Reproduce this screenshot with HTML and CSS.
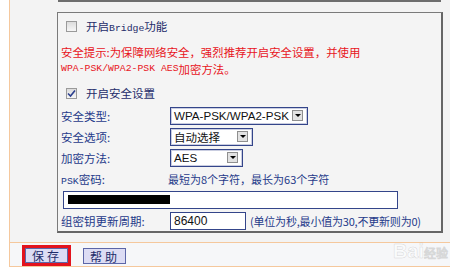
FILE: index.html
```html
<!DOCTYPE html>
<html lang="zh-CN">
<head>
  <meta charset="UTF-8" />
  <title>无线安全设置</title>
  <link rel="stylesheet" href="styles.css">
</head>
<body>

<div class="panel">
  <div class="main">
    <div class="prev-box"></div>

    <div class="box">
      <div class="check-row">
        <span class="cb"></span>
        <span class="cb-label">开启<span class="mono">Bridge</span>功能</span>
      </div>

      <div class="warn">
        <div class="warn-line">安全提示:为保障网络安全，强烈推荐开启安全设置，并使用</div>
        <div class="warn-line"><span class="mono">WPA-PSK/WPA2-PSK AES</span>加密方法。</div>
      </div>

      <div class="check-row second">
        <span class="cb checked">
          <svg width="9" height="9" viewBox="0 0 9 9"><path d="M1 4.5 L3.5 7 L8 1.5" fill="none" stroke="#2b3f8e" stroke-width="1.6"/></svg>
        </span>
        <span class="cb-label">开启安全设置</span>
      </div>

      <div class="form">
        <div class="label">安全类型:</div>
        <div><span class="select type"><span class="val">WPA-PSK/WPA2-PSK</span><span class="arrow"></span></span></div>

        <div class="label">安全选项:</div>
        <div><span class="select option"><span class="val cjk">自动选择</span><span class="arrow"></span></span></div>

        <div class="label">加密方法:</div>
        <div><span class="select method"><span class="val">AES</span><span class="arrow"></span></span></div>

        <div class="label"><span class="mono">PSK</span>密码:</div>
        <div class="hint">最短为8个字符，最长为63个字符</div>

        <div class="full"><span class="input wide"><span class="mask"></span></span></div>

        <div class="label">组密钥更新周期:</div>
        <div class="inline"><span class="input short">86400</span><span class="hint note">(单位为秒,最小值为30,不更新则为0)</span></div>
      </div>
    </div>
  </div>

  <div class="btnrow">
    <span class="hl"><span class="btn">保存</span></span>
    <span class="btn">帮助</span>
  </div>

  <div class="watermark">Bai<span>经验</span></div>
</div>

</body>
</html>
```

FILE: styles.css
```css
* { box-sizing: border-box; }
body {
  margin: 0;
  background: #fff;
  font-family: "Noto Sans CJK SC", "Liberation Sans", sans-serif;
  color: #1f3a8a;
  width: 450px;
  height: 272px;
  overflow: hidden;
}

.panel {
  margin-left: 9px;
  border-left: 1px solid #f5c89d;
  background: #f3f3f3;
  position: relative;
}

.main {
  padding-bottom: 9px;
}

.prev-box {
  margin-left: 48px;
  width: 383px;
  height: 2px;
  border: 2px solid #6e6e6e;
  border-top: none;
}

.box {
  margin-top: 10px;
  margin-left: 47px;
  width: 386px;
  border: 1px solid #7a7a7a;
  border-right: 2px solid #666;
  border-bottom: 2px solid #666;
  background: #f4f4f4;
  padding: 3px 0 0 3px;
}

.mono {
  font-family: "Liberation Mono", monospace;
  font-size: 9.8px;
}

.check-row {
  display: flex;
  align-items: center;
  height: 20px;
  padding-left: 5px;
}

.check-row.second {
  margin-top: 6px;
}

.cb {
  width: 11px;
  height: 11px;
  border: 1px solid #9a9a9a;
  background: linear-gradient(#dcdcdc, #f6f6f6);
  display: flex;
  align-items: center;
  justify-content: center;
}

.cb-label {
  margin-left: 9px;
  font-size: 11.5px;
  color: #1e2c6a;
}

.warn {
  margin-top: 7px;
  color: #e8141c;
  font-size: 11.4px;
}

.warn-line {
  height: 17px;
  display: flex;
  align-items: center;
  white-space: nowrap;
}

.form {
  margin-top: 2px;
  display: grid;
  grid-template-columns: 109px 1fr;
  grid-auto-rows: 21px;
  align-items: center;
}

.label {
  font-size: 11.5px;
  color: #1f3a8a;
}

.full {
  grid-column: 1 / 3;
}

.inline {
  display: flex;
  align-items: center;
}

.select {
  display: flex;
  align-items: center;
  justify-content: space-between;
  height: 18px;
  background: #fff;
  border: 1px solid #34458a;
  box-shadow: inset 0 0 0 1px #c9cde0;
  padding: 0 4px 0 3px;
}

.select.type { width: 138px; }
.select.option { width: 83px; }
.select.method { width: 73px; }

.val {
  font-family: "Liberation Sans", sans-serif;
  font-size: 11.6px;
  color: #111;
}

.val.cjk {
  font-family: "Noto Sans CJK SC", sans-serif;
  font-size: 11.5px;
}

.arrow {
  width: 11px;
  height: 11px;
  background: #e2e2e2;
  border: 1px solid #8f8f8f;
  position: relative;
}

.arrow::after {
  content: "";
  position: absolute;
  left: 2px;
  top: 3px;
  border-left: 3px solid transparent;
  border-right: 3px solid transparent;
  border-top: 3px solid #000;
}

.hint {
  font-size: 11px;
  color: #1f3a8a;
  margin-left: -2px;
}

.hint.note {
  margin-left: 4px;
  letter-spacing: -0.2px;
}

.input {
  display: flex;
  align-items: center;
  height: 18px;
  background: #fff;
  border: 1px solid #34458a;
  font-family: "Liberation Sans", sans-serif;
  font-size: 12px;
  color: #111;
  padding-left: 3px;
}

.input.wide {
  width: 335px;
  margin-left: 2px;
  padding-left: 4px;
}

.input.short {
  width: 76px;
}

.mask {
  width: 102px;
  height: 9px;
  background: #000;
}

.btnrow {
  border-top: 1px solid #f5c89d;
  border-bottom: 1px solid #f5c89d;
  background: #f6f7f9;
  height: 25px;
  padding: 2px 0 0 12px;
  display: flex;
  align-items: flex-start;
  gap: 12px;
}

.hl {
  border: 3px solid #e3131d;
  display: flex;
}

.btn {
  display: flex;
  align-items: center;
  height: 15px;
  padding: 0 5px 0 6px;
  background: #dcdcf4;
  border: 1px solid #5c66a8;
  font-size: 12px;
  letter-spacing: 3px;
  color: #1e2c6a;
}

.btnrow > .btn {
  margin-top: 3px;
  height: 16px;
}

.watermark {
  position: absolute;
  right: 2px;
  bottom: 4px;
  font-family: "Liberation Sans", sans-serif;
  font-weight: bold;
  font-size: 20px;
  color: rgba(255, 255, 255, 0.55);
  -webkit-text-stroke: 0.5px rgba(150, 150, 150, 0.35);
}

.watermark span {
  font-size: 12px;
}
```
